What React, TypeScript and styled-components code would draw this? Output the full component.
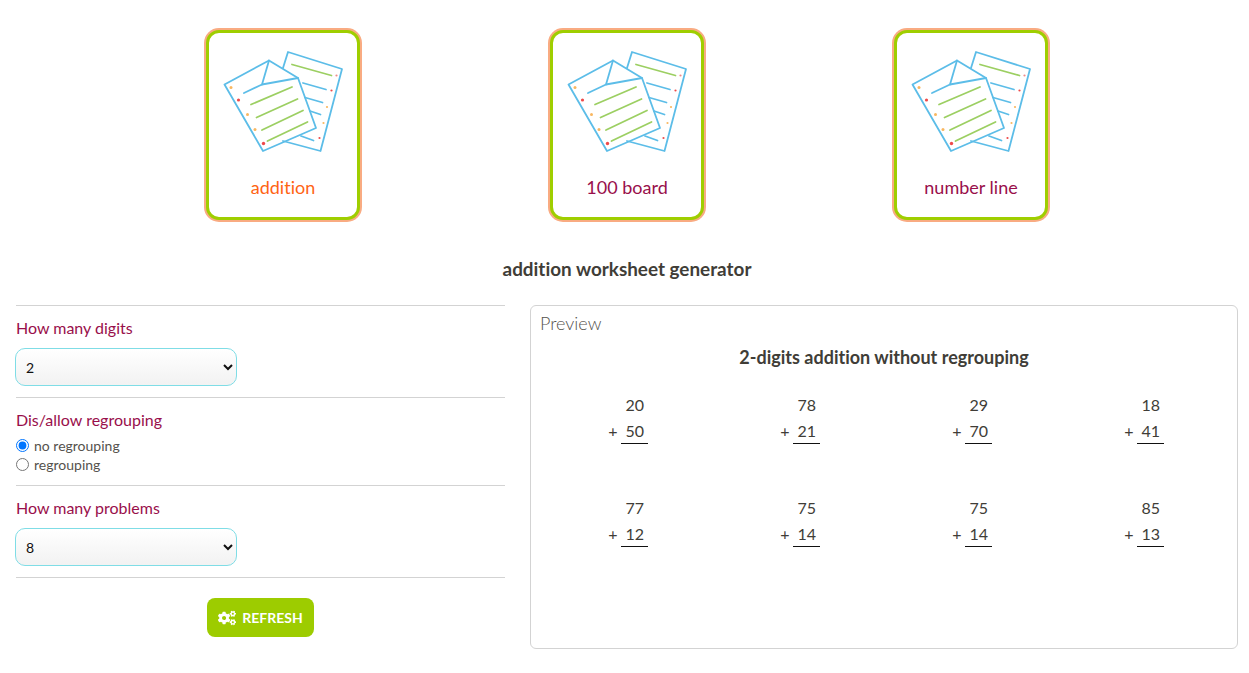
import styled, { createGlobalStyle } from 'styled-components';
import { FaCogs } from 'react-icons/fa';

const GlobalStyle = createGlobalStyle`
  html, body {
    margin: 0;
    padding: 0;
    background: #fff;
    font-family: Lato, "Open Sans", sans-serif;
    font-variant-ligatures: none;
    color: #403d37;
  }
`;

const sheets = [
  { title: 'addition', active: true },
  { title: '100 board', active: false },
  { title: 'number line', active: false },
];

const problems = [
  [20, 50],
  [78, 21],
  [29, 70],
  [18, 41],
  [77, 12],
  [75, 14],
  [75, 14],
  [85, 13],
];

function PapersIcon() {
  const blue = '#5cbde8';
  const green = '#9ccf62';
  return (
    <IconSvg viewBox="0 0 135 115" fill="none" strokeLinecap="round" strokeLinejoin="round">
      <g stroke={blue} strokeWidth="1.8">
        <path d="M68 23 L73 7 L127 24 L105.5 106 L68 96" />
        <path d="M9.5 39.5 L54 15.5 L83 33 L101 83 L48 106 Z" />
        <path d="M54 15.5 L47 39.5 L83 33" />
        <path d="M29 48 L47 39.5" />
        <path d="M88 38 L111 44.5" />
        <path d="M90 52.5 L107.5 57.5" />
        <path d="M95 66 L105.5 69.5" />
        <path d="M86 91 L98.5 95.5" />
      </g>
      <g stroke={green} strokeWidth="1.8">
        <path d="M77 19.5 L116.5 30.5" />
        <path d="M36 59.5 L77 42" />
        <path d="M41.5 72.5 L82.5 54" />
        <path d="M47 85 L88 65.5" />
        <path d="M52.5 96 L92.5 77" />
      </g>
      <g fill="#f9b760">
        <circle cx="16" cy="42.5" r="1.5" />
        <circle cx="32.5" cy="69.5" r="1.5" />
        <circle cx="40" cy="84.5" r="1.5" />
        <circle cx="112" cy="62" r="1.1" />
        <circle cx="108.5" cy="78" r="1.1" />
      </g>
      <g fill="#ee4a4a">
        <circle cx="23.5" cy="55" r="1.6" />
        <circle cx="48.5" cy="98.5" r="1.7" />
        <circle cx="116.5" cy="45.5" r="1.1" />
        <circle cx="104.5" cy="93" r="1.1" />
      </g>
      <circle cx="121.5" cy="30.5" r="1.1" fill="#f08a8a" />
    </IconSvg>
  );
}

export default function App() {
  return (
    <Page>
      <GlobalStyle />
      <CardRow>
        {sheets.map((sheet) => (
          <CardSlot key={sheet.title}>
            <Card>
              <PapersIcon />
              <CardTitle $active={sheet.active}>{sheet.title}</CardTitle>
            </Card>
          </CardSlot>
        ))}
      </CardRow>
      <Heading>addition worksheet generator</Heading>
      <Columns>
        <Options>
          <Field>
            <FieldLabel>How many digits</FieldLabel>
            <Select defaultValue="2">
              <option>1</option>
              <option>2</option>
              <option>3</option>
            </Select>
          </Field>
          <Field>
            <FieldLabel>Dis/allow regrouping</FieldLabel>
            <RadioGroup>
              <RadioRow>
                <input type="radio" name="regroup" defaultChecked />
                no regrouping
              </RadioRow>
              <RadioRow>
                <input type="radio" name="regroup" />
                regrouping
              </RadioRow>
            </RadioGroup>
          </Field>
          <Field>
            <FieldLabel>How many problems</FieldLabel>
            <Select defaultValue="8">
              <option>4</option>
              <option>8</option>
              <option>12</option>
            </Select>
          </Field>
          <ButtonRow>
            <RefreshButton>
              <FaCogs size={18} />
              REFRESH
            </RefreshButton>
          </ButtonRow>
        </Options>
        <Preview>
          <PreviewLabel>Preview</PreviewLabel>
          <PreviewTitle>2-digits addition without regrouping</PreviewTitle>
          <ProblemGrid>
            {problems.map(([a, b], i) => (
              <Problem key={i}>
                <TopNumber>{a}</TopNumber>
                <BottomRow>
                  <span>+</span>
                  <Addend>{b}</Addend>
                </BottomRow>
              </Problem>
            ))}
          </ProblemGrid>
        </Preview>
      </Columns>
    </Page>
  );
}

const Page = styled.div`
  width: 1249px;
  height: 673px;
  overflow: hidden;
  padding-top: 30px;
  box-sizing: border-box;
`;

const CardRow = styled.div`
  display: flex;
  padding-left: 111px;
`;

const CardSlot = styled.div`
  display: flex;
  justify-content: center;
  width: 344px;
`;

const Card = styled.div`
  display: flex;
  flex-direction: column;
  align-items: center;
  box-sizing: border-box;
  width: 154px;
  height: 190px;
  padding-top: 12px;
  border: 3px solid #9fce00;
  border-radius: 13px;
  box-shadow: 0 0 0 2px #f9ab82;
  background: #fff;
`;

const IconSvg = styled.svg`
  display: block;
  flex: none;
  width: 135px;
  height: 115px;
  margin-right: 1px;
`;

const CardTitle = styled.div<{ $active: boolean }>`
  margin-top: 15px;
  font-size: 18px;
  line-height: 24px;
  color: ${(p) => (p.$active ? '#ff6414' : '#990f4b')};
`;

const Heading = styled.h2`
  margin: 37px 0 0;
  padding-left: 5px;
  text-align: center;
  font-size: 18.9px;
  line-height: 24px;
  font-weight: 700;
  color: #403d37;
`;

const Columns = styled.div`
  display: flex;
  align-items: flex-start;
  margin-top: 24px;
  padding-left: 16px;
`;

const Options = styled.div`
  width: 489px;
  flex: none;
`;

const Field = styled.div`
  box-sizing: border-box;
  border-top: 1px solid #d3d3d3;
  padding-top: 11px;
  padding-bottom: 11px;
`;

const FieldLabel = styled.div`
  font-size: 16px;
  line-height: 22px;
  color: #990f4b;
`;

const Select = styled.select`
  display: block;
  box-sizing: border-box;
  width: 222px;
  height: 38px;
  margin: 9px 0 0 -1px;
  padding: 0 6px;
  border: 1px solid #7fdde6;
  border-radius: 10px;
  background: linear-gradient(#ffffff, #f2f2f2);
  font-family: Lato, sans-serif;
  font-size: 14px;
  color: #111;
`;

const RadioGroup = styled.div`
  padding-top: 5px;
`;

const RadioRow = styled.label`
  display: flex;
  align-items: center;
  gap: 5px;
  height: 19px;
  font-size: 14px;
  color: #55524d;

  input {
    margin: 0;
    width: 13px;
    height: 13px;
  }
`;

const ButtonRow = styled.div`
  display: flex;
  justify-content: center;
  border-top: 1px solid #d3d3d3;
  padding-top: 20px;
`;

const RefreshButton = styled.button`
  display: flex;
  align-items: center;
  justify-content: center;
  gap: 6px;
  width: 107px;
  height: 39px;
  padding: 0;
  border: none;
  border-radius: 8px;
  background: #9dcc00;
  color: #fff;
  font-family: Lato, sans-serif;
  font-size: 14px;
  font-weight: 700;
`;

const Preview = styled.div`
  box-sizing: border-box;
  width: 708px;
  height: 344px;
  margin-left: 25px;
  padding: 6px 9px 0;
  border: 1px solid #d3d3d3;
  border-radius: 6px;
`;

const PreviewLabel = styled.div`
  font-size: 18px;
  font-weight: 300;
  line-height: 22px;
  color: #55524d;
`;

const PreviewTitle = styled.div`
  margin-top: 11px;
  text-align: center;
  font-size: 18px;
  font-weight: 700;
  line-height: 24px;
  color: #403d37;
`;

const ProblemGrid = styled.div`
  display: grid;
  grid-template-columns: repeat(4, 172px);
  row-gap: 51px;
  margin-top: 23px;
`;

const Problem = styled.div`
  justify-self: center;
  display: flex;
  flex-direction: column;
  align-items: flex-end;
  width: 44px;
  font-size: 16px;
  line-height: 26px;
  color: #403d37;
`;

const TopNumber = styled.div`
  padding-right: 4px;
`;

const BottomRow = styled.div`
  display: flex;
  gap: 4px;
`;

const Addend = styled.span`
  padding: 0 4px;
  border-bottom: 1px solid #111;
  box-sizing: border-box;
  height: 26px;
`;
